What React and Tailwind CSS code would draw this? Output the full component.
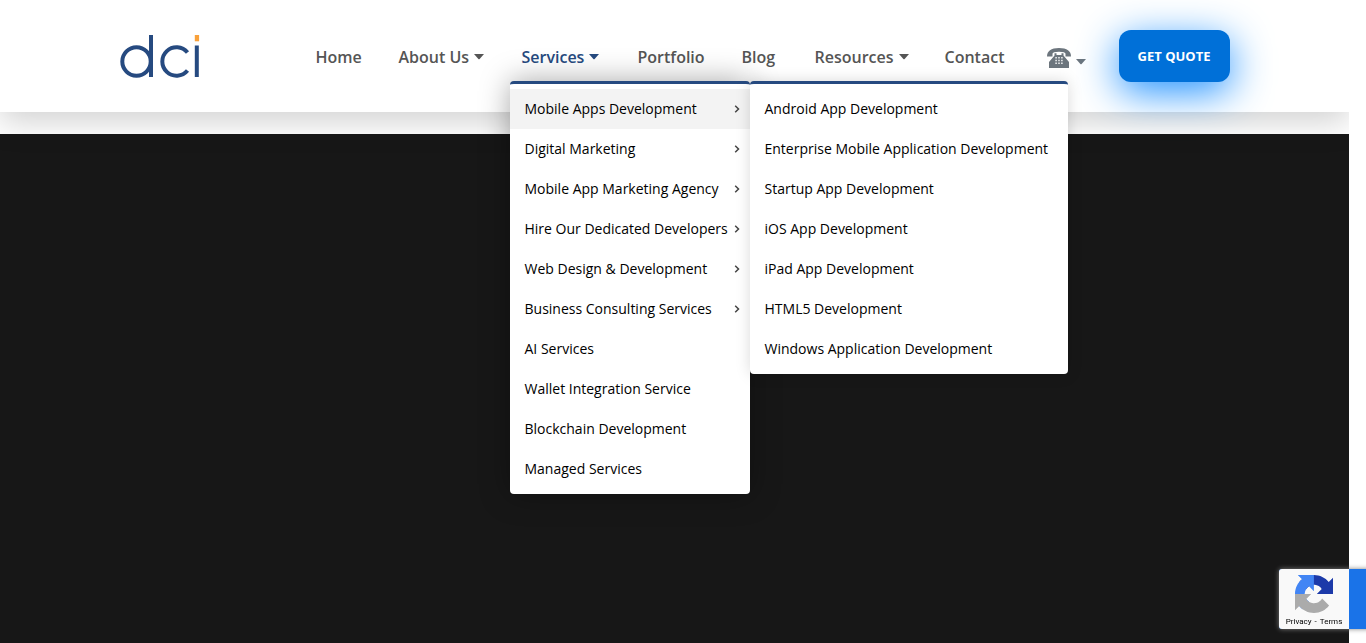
import React from "react";

const services = [
  { label: "Mobile Apps Development", sub: true, active: true },
  { label: "Digital Marketing", sub: true },
  { label: "Mobile App Marketing Agency", sub: true },
  { label: "Hire Our Dedicated Developers", sub: true },
  { label: "Web Design & Development", sub: true },
  { label: "Business Consulting Services", sub: true },
  { label: "AI Services" },
  { label: "Wallet Integration Service" },
  { label: "Blockchain Development" },
  { label: "Managed Services" },
];

const mobileApps = [
  "Android App Development",
  "Enterprise Mobile Application Development",
  "Startup App Development",
  "iOS App Development",
  "iPad App Development",
  "HTML5 Development",
  "Windows Application Development",
];

function Caret() {
  return (
    <svg aria-hidden="true" className="h-[7px] w-[10px] shrink-0" viewBox="0 0 10 7">
      <path d="M0 0h10L5.6 4.900Q5 5.400 4.4 4.900Z" fill="currentColor" />
    </svg>
  );
}

function Logo() {
  return (
    <svg role="img" aria-label="dci" className="h-11 w-20" viewBox="0 0 80 44">
      <g fill="none" stroke="#264a80" strokeWidth="4">
        <circle cx="16.500" cy="26.5" r="14.2" />
        <path d="M31 0V42" />
        <path d="M67.500 17.5A14.2 14.2 0 1 0 67.500 35.5" />
        <path d="M76.8 10.5V42" />
      </g>
      <path d="M74.8 0h4.3v6.3h-4.3z" fill="#f9a13a" />
    </svg>
  );
}

function Phone() {
  return (
    <svg aria-hidden="true" className="h-5 w-6" viewBox="0 0 24 20" fill="#6c757d">
      <path d="M0 8.500C0 3 4 0 12 0s12 3 12 8.500h-5.500V5.800Q18.500 3.800 12 3.800T5.500 5.800v2.700Z" />
      <path d="M7.500 5.300h2V7h5V5.300h2V7.500L22 14v6H2v-6l5.500-6.500Z" />
      <g fill="#fff" opacity="0.85">
        <path d="M8.300 9h1.600v1.400H8.300zM11.200 9h1.600v1.400h-1.600zM14.100 9h1.600v1.400h-1.600zM8.300 11.800h1.600v1.400H8.300zM11.200 11.800h1.600v1.400h-1.600zM14.100 11.800h1.600v1.400h-1.600zM8.300 14.600h1.600v1.400H8.300zM11.200 14.600h1.600v1.400h-1.600zM14.100 14.600h1.600v1.400h-1.600z" />
      </g>
    </svg>
  );
}

function NavLink({ label, caret, active }) {
  return (
    <a
      href="#"
      className={
        active
          ? "flex items-center gap-[5px] whitespace-nowrap text-[#264a80]"
          : "flex items-center gap-[5px] whitespace-nowrap"
      }
    >
      {label}
      {caret && <Caret />}
    </a>
  );
}

function ServicesMenu() {
  return (
    <div className="absolute top-9 -left-3 z-20 w-60 rounded border-t-[3px] border-[#264a80] bg-white py-[5px] font-['Open_Sans',sans-serif] text-sm font-normal text-black shadow-[0_0_30px_rgba(0,0,0,0.35)]">
      <ul>
        {services.map((s) => (
          <li key={s.label}>
            <a
              href="#"
              className={
                s.active
                  ? "flex h-10 items-center justify-between bg-[#f3f3f3] pr-2.5 pl-[15px] whitespace-nowrap"
                  : "flex h-10 items-center justify-between pr-2.5 pl-[15px] whitespace-nowrap"
              }
            >
              {s.label}
              {s.sub && (
                <svg aria-hidden="true" className="h-2 w-1.5 shrink-0" viewBox="0 0 6 8">
                  <path d="M1.200 .8L4.500 4L1.200 7.200" fill="none" stroke="#444" strokeWidth="1.500" />
                </svg>
              )}
            </a>
          </li>
        ))}
      </ul>
      <ul className="absolute -top-[3px] left-full w-[318px] rounded border-t-[3px] border-[#264a80] bg-white py-[5px] shadow-[0_0_15px_rgba(0,0,0,0.15)]">
        {mobileApps.map((label) => (
          <li key={label}>
            <a href="#" className="flex h-10 items-center pl-[15px] whitespace-nowrap">
              {label}
            </a>
          </li>
        ))}
      </ul>
    </div>
  );
}

function Recaptcha() {
  return (
    <aside className="fixed -right-[169px] bottom-3.5 z-30 flex h-[60px] w-64 overflow-hidden rounded-[3px] bg-[#1a73e8] shadow-[0_0_5px_gray]">
      <div className="flex w-[70px] flex-col items-center bg-[#f9f9f9] pt-1.5">
        <svg aria-hidden="true" className="h-[38px] w-[38px]" viewBox="0 0 64 64">
          <path d="M64 31.955l-.033-1.370V4.687l-7.160 7.160C50.948 4.674 42.033.093 32.050.093c-10.400 0-19.622 4.960-25.458 12.640l11.736 11.860a15.550 15.550 0 0 1 4.754-5.334c2.050-1.600 4.952-2.906 8.968-2.906.485 0 .86.057 1.135.163 4.976.393 9.288 3.140 11.828 7.124l-8.307 8.307L64 31.953" fill="#1c3aa9" />
          <path d="M31.862.094l-1.370.033H4.594l7.160 7.160C4.580 13.147 0 22.060 0 32.046c0 10.400 4.960 19.622 12.640 25.458L24.500 45.768a15.550 15.550 0 0 1-5.334-4.754c-1.600-2.050-2.906-4.952-2.906-8.968 0-.485.057-.86.163-1.135.393-4.976 3.140-9.288 7.124-11.828l8.307 8.307L31.860.095" fill="#4285f4" />
          <path d="M.001 32.045l.033 1.370v25.898l7.160-7.160c5.860 7.173 14.774 11.754 24.760 11.754 10.400 0 19.622-4.960 25.458-12.640l-11.736-11.860a15.550 15.550 0 0 1-4.754 5.334c-2.050 1.600-4.952 2.906-8.968 2.906-.485 0-.86-.057-1.135-.163-4.976-.393-9.288-3.140-11.828-7.124l8.307-8.307L0 32.047" fill="#ababab" />
        </svg>
        <p className="mt-[3px] flex gap-[3px] font-['Roboto',sans-serif] text-[8px] leading-3 text-black">
          <a href="#">Privacy</a>
          <span>-</span>
          <a href="#">Terms</a>
        </p>
      </div>
    </aside>
  );
}

export default function App() {
  return (
    <div className="bg-white pr-[17px] font-['Open_Sans',sans-serif]">
      <div className="flex min-h-screen flex-col overflow-hidden">
        <header className="relative z-10 mb-[22px] h-28 bg-white shadow-[0_10px_30px_rgba(0,0,0,0.18)]">
          <div className="mx-auto flex h-full max-w-[1140px] items-center px-[15px]">
            <a href="#" className="pt-0.5">
              <Logo />
            </a>
            <nav className="ml-auto pt-0.5 pr-[29px] text-[16px] font-semibold text-[#555]">
              <ul className="grid grid-cols-[83px_123px_116px_104px_73px_130px_102px_43px]">
                <li><NavLink label="Home" /></li>
                <li><NavLink label="About Us" caret /></li>
                <li className="relative">
                  <NavLink label="Services" caret active />
                  <ServicesMenu />
                </li>
                <li><NavLink label="Portfolio" /></li>
                <li><NavLink label="Blog" /></li>
                <li><NavLink label="Resources" caret /></li>
                <li><NavLink label="Contact" /></li>
                <li>
                  <button type="button" aria-label="Call us" className="flex items-end gap-[5px] pt-[3px] text-[#6c757d]">
                    <Phone />
                    <span className="pb-0.5"><Caret /></span>
                  </button>
                </li>
              </ul>
            </nav>
            <button
              type="button"
              className="h-[52px] w-[111px] rounded-xl bg-[#0070d8] pt-0.5 font-['Open_Sans',sans-serif] text-[13px] font-bold text-white shadow-[0_10px_40px_#1e90ff]"
            >
              GET QUOTE
            </button>
          </div>
        </header>
        <main className="flex-1 bg-[#171717]" />
      </div>
      <Recaptcha />
    </div>
  );
}
